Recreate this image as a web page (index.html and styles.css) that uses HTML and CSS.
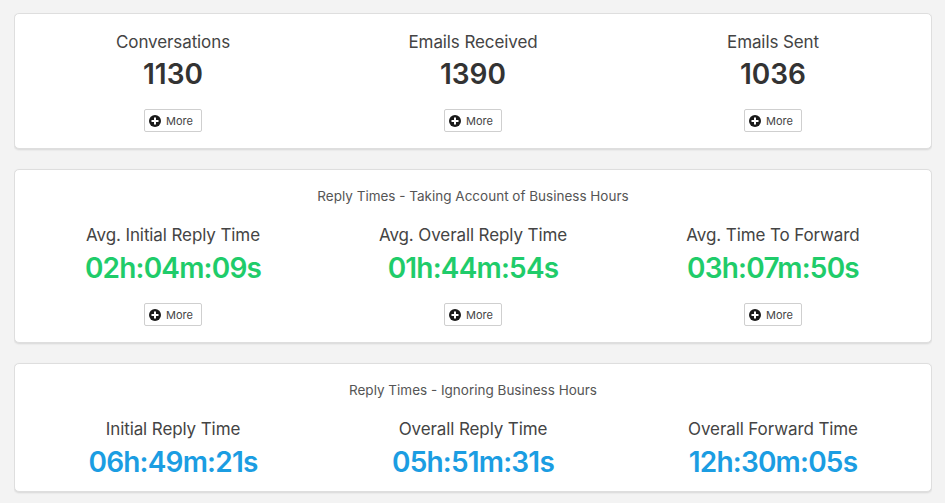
FILE: index.html
```html
<!DOCTYPE html>
<html lang="en">
<head>
    <meta charset="UTF-8">
    <meta name="viewport" content="width=device-width, initial-scale=1.0">
    <title>Mailbox Stats</title>
    <link rel="stylesheet" href="styles.css">
</head>
<body>
    <div class="card">
        <div class="stats">
            <div class="stat">
                <div class="stat-title">Conversations</div>
                <div class="stat-value">1130</div>
                <button class="more-btn"><span class="plus"></span>More</button>
            </div>
            <div class="stat">
                <div class="stat-title">Emails Received</div>
                <div class="stat-value">1390</div>
                <button class="more-btn"><span class="plus"></span>More</button>
            </div>
            <div class="stat">
                <div class="stat-title">Emails Sent</div>
                <div class="stat-value">1036</div>
                <button class="more-btn"><span class="plus"></span>More</button>
            </div>
        </div>
    </div>

    <div class="card">
        <div class="card-header">Reply Times - Taking Account of Business Hours</div>
        <div class="stats">
            <div class="stat">
                <div class="stat-title">Avg. Initial Reply Time</div>
                <div class="stat-value time green">02h:04m:09s</div>
                <button class="more-btn"><span class="plus"></span>More</button>
            </div>
            <div class="stat">
                <div class="stat-title">Avg. Overall Reply Time</div>
                <div class="stat-value time green">01h:44m:54s</div>
                <button class="more-btn"><span class="plus"></span>More</button>
            </div>
            <div class="stat">
                <div class="stat-title">Avg. Time To Forward</div>
                <div class="stat-value time green">03h:07m:50s</div>
                <button class="more-btn"><span class="plus"></span>More</button>
            </div>
        </div>
    </div>

    <div class="card card-last">
        <div class="card-header">Reply Times - Ignoring Business Hours</div>
        <div class="stats">
            <div class="stat">
                <div class="stat-title">Initial Reply Time</div>
                <div class="stat-value time blue">06h:49m:21s</div>
            </div>
            <div class="stat">
                <div class="stat-title">Overall Reply Time</div>
                <div class="stat-value time blue">05h:51m:31s</div>
            </div>
            <div class="stat">
                <div class="stat-title">Overall Forward Time</div>
                <div class="stat-value time blue">12h:30m:05s</div>
            </div>
        </div>
    </div>
</body>
</html>
```

FILE: styles.css
```css
body {
    font-family: Inter, "Noto Sans", sans-serif;
    background-color: #f3f3f3;
    margin: 13px 13px 0 14px;
    color: #333;
}

.card {
    background-color: #fff;
    border: 1px solid #dedede;
    border-radius: 5px;
    box-shadow: 0 1px 2px rgba(0,0,0,0.12);
    padding: 18px 8px 16px;
    margin-bottom: 20px;
    text-align: center;
}

.card-last {
    padding-bottom: 12px;
}

.card-header {
    font-size: 13.5px;
    line-height: 16px;
    color: #555;
    margin-bottom: 21px;
}

.stats {
    display: grid;
    grid-template-columns: repeat(3, 1fr);
}

.stat-title {
    font-size: 17px;
    line-height: 20px;
    color: #444;
    letter-spacing: -0.1px;
}

.stat-value {
    font-size: 28px;
    line-height: 34px;
    font-weight: 600;
    margin-top: 5px;
    color: #333;
}

.card-header + .stats .stat-value {
    margin-top: 6px;
}

.stat-value.time {
    letter-spacing: -0.8px;
}

.stat-value.green {
    color: #1fcc6a;
}

.stat-value.blue {
    color: #1b9de2;
}

.more-btn {
    display: inline-flex;
    align-items: center;
    gap: 5px;
    height: 23px;
    padding: 0 8px 0 4px;
    margin-top: 18px;
    background-color: #fff;
    border: 1px solid #cfcfcf;
    border-radius: 2px;
    font-family: inherit;
    font-size: 11px;
    color: #444;
}

.plus {
    position: relative;
    width: 12px;
    height: 12px;
    border-radius: 50%;
    background-color: #1a1a1a;
}

.plus::before,
.plus::after {
    content: "";
    position: absolute;
    background-color: #fff;
    left: 50%;
    top: 50%;
    transform: translate(-50%, -50%);
}

.plus::before {
    width: 7px;
    height: 2px;
}

.plus::after {
    width: 2px;
    height: 7px;
}
```
